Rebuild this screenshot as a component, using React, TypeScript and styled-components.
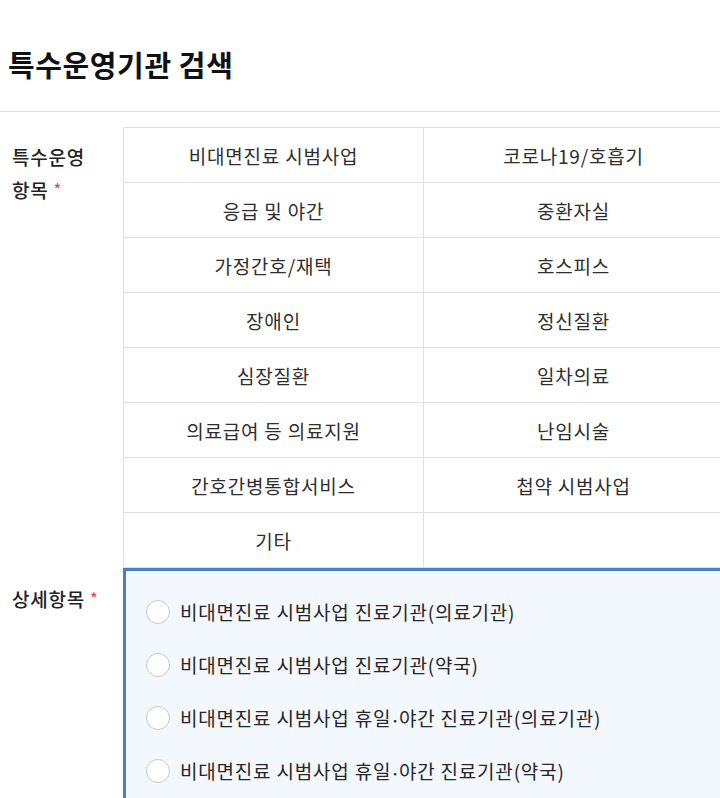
import styled, { createGlobalStyle } from 'styled-components';

const categories = [
  '비대면진료 시범사업',
  '코로나19/호흡기',
  '응급 및 야간',
  '중환자실',
  '가정간호/재택',
  '호스피스',
  '장애인',
  '정신질환',
  '심장질환',
  '일차의료',
  '의료급여 등 의료지원',
  '난임시술',
  '간호간병통합서비스',
  '첩약 시범사업',
  '기타',
  '',
];

const details = [
  '비대면진료 시범사업 진료기관(의료기관)',
  '비대면진료 시범사업 진료기관(약국)',
  '비대면진료 시범사업 휴일·야간 진료기관(의료기관)',
  '비대면진료 시범사업 휴일·야간 진료기관(약국)',
];

// the middle dot is full width in Noto, so it gets its own narrow span
function DetailText({ text }: { text: string }) {
  const parts = text.split('·');
  return (
    <span>
      {parts.map((p, i) => (
        <span key={i}>
          {i > 0 && <Dot>·</Dot>}
          {p}
        </span>
      ))}
    </span>
  );
}

export default function App() {
  return (
    <>
      <GlobalStyle />
      <Page>
        <Header>
          <Title>특수운영기관 검색</Title>
        </Header>
        <Form>
          <FieldRow>
            <Label>
              특수운영
              <br />
              항목 <Required>*</Required>
            </Label>
            <CategoryGrid>
              {categories.map((name, i) => (
                <CategoryCell key={i}>{name}</CategoryCell>
              ))}
            </CategoryGrid>
          </FieldRow>
          <FieldRow>
            <Label>
              상세항목 <Required>*</Required>
            </Label>
            <DetailBox>
              {details.map((d) => (
                <RadioItem key={d}>
                  <RadioCircle type="radio" name="detail" />
                  <DetailText text={d} />
                </RadioItem>
              ))}
            </DetailBox>
          </FieldRow>
        </Form>
      </Page>
    </>
  );
}

const GlobalStyle = createGlobalStyle`
  html, body {
    margin: 0;
    padding: 0;
    background: #fff;
    overflow: hidden;
  }
  body {
    font-family: "Noto Sans CJK KR", "Noto Sans", sans-serif;
    color: #333;
  }
`;

const Page = styled.div`
  width: 720px;
  height: 798px;
  overflow: hidden;
`;

const Header = styled.header`
  height: 112px;
  display: flex;
  align-items: center;
  padding: 0 8px;
  box-sizing: border-box;
  border-bottom: 1px solid #dedede;
`;

const Title = styled.h1`
  margin: 16px 0 0;
  font-size: 29px;
  font-weight: 700;
  letter-spacing: 0.6px;
  color: #111;
`;

const Form = styled.div`
  padding-top: 15px;
`;

const FieldRow = styled.div`
  display: flex;
  align-items: flex-start;
`;

const Label = styled.div`
  flex: 0 0 123px;
  box-sizing: border-box;
  padding: 14px 0 0 12px;
  font-size: 19px;
  letter-spacing: 0.8px;
  line-height: 32px;
  font-weight: 500;
  color: #222;
`;

const Required = styled.span`
  color: #e0474c;
  font-size: 15px;
  vertical-align: 3px;
`;

const CategoryGrid = styled.div`
  flex: 0 0 auto;
  display: grid;
  grid-template-columns: 300px 300px;
  grid-auto-rows: 55px;
  border-top: 1px solid #e0e0e0;
  border-left: 1px solid #e0e0e0;
`;

const CategoryCell = styled.div`
  display: flex;
  align-items: center;
  justify-content: center;
  box-sizing: border-box;
  border-right: 1px solid #e0e0e0;
  border-bottom: 1px solid #e0e0e0;
  font-size: 19px;
  letter-spacing: 0.8px;
  color: #2e2e2e;
`;

const DetailBox = styled.div`
  flex: 0 0 620px;
  box-sizing: border-box;
  border-top: 3px solid #4a7fc6;
  border-left: 3px solid #4a7fc6;
  background: #f3f7fe;
  padding: 14px 0 20px 20px;
  min-height: 240px;
`;

const RadioItem = styled.label`
  display: flex;
  align-items: center;
  gap: 10px;
  height: 53px;
  font-size: 19px;
  letter-spacing: 0.8px;
  color: #262626;
`;

const Dot = styled.span`
  font-size: 13px;
  letter-spacing: 0;
  font-weight: 700;
`;

const RadioCircle = styled.input`
  appearance: none;
  margin: 0;
  width: 24px;
  height: 24px;
  border-radius: 50%;
  border: 1px solid #c8c8c8;
  background: #fff;
  flex: 0 0 auto;
`;
